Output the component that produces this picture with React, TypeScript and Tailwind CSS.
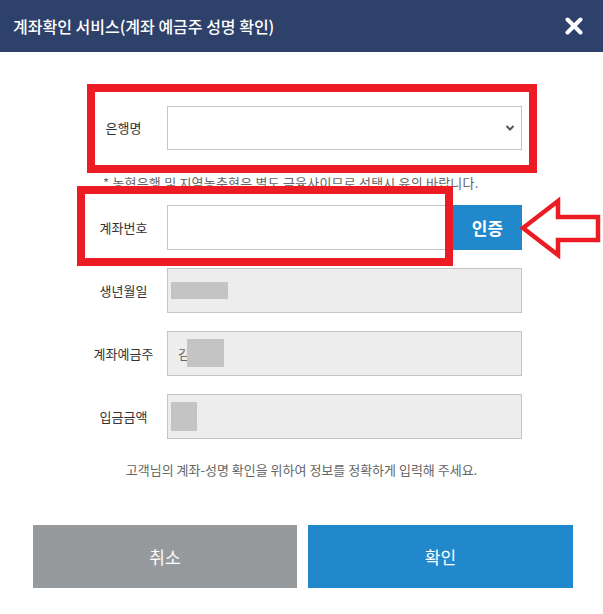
import React from "react";

const KR = { fontFamily: '"Noto Sans CJK KR", "Noto Sans", sans-serif' };

function Label({ children }: { children: React.ReactNode }) {
  return (
    <div className="w-[87px] shrink-0 text-center text-[13px] tracking-[0px] text-[#333]">
      {children}
    </div>
  );
}

export default function App() {
  return (
    <div className="relative w-[603px] h-[614px] bg-white overflow-hidden" style={KR}>
      {/* Header */}
      <div className="h-[52px] bg-[#2e416b] flex items-center justify-between pl-[13px] pr-[18px]">
        <div className="text-white text-[16px] font-medium tracking-[0px]">
          계좌확인 서비스(계좌 예금주 성명 확인)
        </div>
        <svg width="18" height="18" viewBox="0 0 18 18" className="mr-[2px]">
          <path d="M2.5 2.5 L15.5 15.5 M15.5 2.5 L2.5 15.5" stroke="white" strokeWidth="4" strokeLinecap="round" />
        </svg>
      </div>

      {/* Form */}
      <div className="pl-[80px]">
        <div className="mt-[54px] flex items-center h-[44px]">
          <Label>은행명</Label>
          <div className="w-[355px] h-[44px] border border-[#c4c4c4] bg-white flex items-center justify-end pr-[6px]">
            <svg width="10" height="8" viewBox="0 0 10 8">
              <path d="M1.5 2 L5 5.5 L8.5 2" stroke="#555" strokeWidth="2" fill="none" />
            </svg>
          </div>
        </div>

        <div className="mt-[24px] h-[18px] leading-[18px] pl-[23px] text-[13px] tracking-[0.2px] text-[#666] whitespace-nowrap">
          * 농협은행 및 지역농축협은 별도 금융사이므로 선택시 유의 바랍니다.
        </div>

        <div className="mt-[13px] flex items-center h-[45px]">
          <Label>계좌번호</Label>
          <div className="w-[286px] h-[45px] border border-[#c4c4c4] bg-white" />
          <div className="w-[69px] h-[45px] bg-[#2288cc] text-white text-[17px] font-bold flex items-center justify-center">
            인증
          </div>
        </div>

        <div className="mt-[18px] flex items-center h-[45px]">
          <Label>생년월일</Label>
          <div className="w-[355px] h-[45px] border border-[#c4c4c4] bg-[#ededed] flex items-center pl-[3px]">
            <div className="w-[57px] h-[17px] bg-[#c4c4c4]" />
          </div>
        </div>

        <div className="mt-[18px] flex items-center h-[45px]">
          <Label>계좌예금주</Label>
          <div className="relative w-[355px] h-[45px] border border-[#c4c4c4] bg-[#ededed] flex items-center pl-[10px] text-[13px] text-[#666]">
            김
            <div className="absolute left-[19px] top-[7px] w-[37px] h-[28px] bg-[#c4c4c4]" />
          </div>
        </div>

        <div className="mt-[18px] flex items-center h-[45px]">
          <Label>입금금액</Label>
          <div className="w-[355px] h-[45px] border border-[#c4c4c4] bg-[#ededed] flex items-center pl-[3px]">
            <div className="w-[26px] h-[29px] bg-[#c4c4c4]" />
          </div>
        </div>
      </div>

      <div className="mt-[22px] h-[18px] leading-[18px] text-center text-[13px] tracking-[0px] text-[#666]">
        고객님의 계좌-성명 확인을 위하여 정보를 정확하게 입력해 주세요.
      </div>

      <div className="mt-[46px] flex gap-[11px] pl-[33px]">
        <div className="w-[264px] h-[63px] bg-[#979a9d] text-white text-[17px] flex items-center justify-center">
          취소
        </div>
        <div className="w-[265px] h-[63px] bg-[#2288cc] text-white text-[17px] flex items-center justify-center">
          확인
        </div>
      </div>

      {/* Annotations */}
      <div className="absolute left-[87px] top-[84px] w-[450px] h-[89px] border-[8px] border-[#ed1c24] pointer-events-none" />
      <div className="absolute left-[77px] top-[186px] w-[376px] h-[80px] border-[8px] border-[#ed1c24] pointer-events-none" />
      <svg className="absolute left-[515px] top-[195px]" width="88" height="66" viewBox="515 195 88 66">
        <polygon
          points="523,228 558,201 558,217 598,217 598,240 558,240 558,255"
          fill="white"
          stroke="#ed1c24"
          strokeWidth="4.5"
          strokeLinejoin="miter"
        />
      </svg>
    </div>
  );
}
